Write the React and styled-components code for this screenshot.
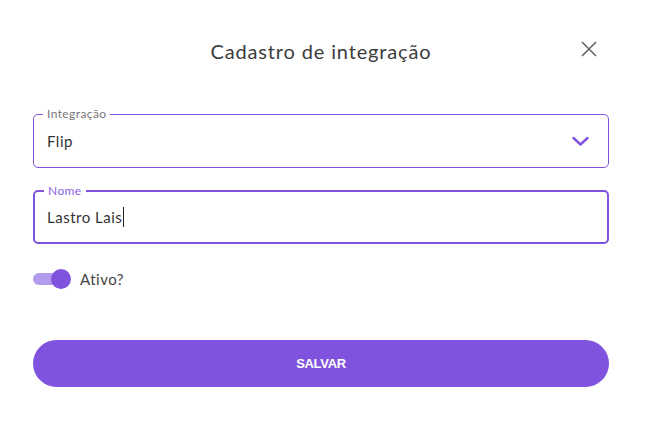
import React from "react";
import styled, { createGlobalStyle } from "styled-components";

const Global = createGlobalStyle`
  html, body { margin: 0; padding: 0; background: #fff; }
  body { font-family: "Lato", "Noto Sans", sans-serif; }
  * { box-sizing: border-box; }
`;

const Dialog = styled.div`
  width: 647px;
  height: 423px;
  background: #fff;
  padding: 0 38px 0 33px;
  display: flex;
  flex-direction: column;
`;

const Header = styled.div`
  height: 104px;
  display: flex;
  align-items: center;
  justify-content: center;
  position: relative;
  padding-bottom: 3px;
`;

const Title = styled.h2`
  margin: 0;
  font-size: 20px;
  font-weight: 400;
  color: #3c3c3c;
  letter-spacing: 0.85px;
`;

const Close = styled.button`
  position: absolute;
  right: 2px;
  top: 31px;
  width: 36px;
  height: 36px;
  border: none;
  background: transparent;
  display: flex;
  align-items: center;
  justify-content: center;
  padding: 0;
  cursor: pointer;
`;

const Field = styled.div`
  position: relative;
  height: 54px;
  border: ${(p) => (p.$focused ? "2px solid #7f53de" : "1px solid #7f53de")};
  border-radius: 5px;
  display: flex;
  align-items: center;
  padding: 0 ${(p) => (p.$focused ? "12px" : "13px")};
  margin-top: ${(p) => p.$mt || 0}px;
`;

const Label = styled.span`
  position: absolute;
  top: -8px;
  left: 9px;
  padding: 0 4px;
  background: #fff;
  font-size: 12px;
  letter-spacing: 0.4px;
  line-height: 14px;
  color: ${(p) => (p.$active ? "#8a62e3" : "#777")};
`;

const Value = styled.span`
  flex: 1;
  font-size: 15px;
  letter-spacing: 0.5px;
  color: #333;
  display: flex;
  align-items: center;
`;

const Caret = styled.span`
  display: inline-block;
  width: 1px;
  height: 20px;
  background: #222;
  margin-left: 1px;
`;

const Chevron = styled.svg`
  margin-right: 6px;
  flex: none;
`;

const SwitchRow = styled.div`
  display: flex;
  align-items: center;
  margin-top: 24px;
  height: 22px;
`;

const Track = styled.div`
  position: relative;
  width: 28px;
  height: 12px;
  border-radius: 6px;
  background: #b39bed;
`;

const Thumb = styled.div`
  position: absolute;
  right: -10px;
  top: -4px;
  width: 20px;
  height: 20px;
  border-radius: 50%;
  background: #7f53de;
`;

const SwitchLabel = styled.span`
  margin-left: 19px;
  font-size: 15px;
  letter-spacing: 0.5px;
  color: #444;
`;

const Button = styled.button`
  margin-top: 50px;
  height: 47px;
  width: 100%;
  border: none;
  border-radius: 24px;
  background: #7f53de;
  color: #fff;
  font-family: "Liberation Sans", Arial, sans-serif;
  font-weight: 700;
  font-size: 13px;
  letter-spacing: -0.3px;
  cursor: pointer;
`;

export default function App() {
  return (
    <>
      <Global />
      <Dialog>
        <Header>
          <Title>Cadastro de integração</Title>
          <Close aria-label="Fechar">
            <svg width="16" height="16" viewBox="0 0 16 16">
              <path d="M1 1 L15 15 M15 1 L1 15" stroke="#666" strokeWidth="1.6" />
            </svg>
          </Close>
        </Header>
        <Field $mt={10}>
          <Label>Integração</Label>
          <Value>Flip</Value>
          <Chevron width="17" height="12" viewBox="0 0 17 12">
            <path d="M1.5 3 L8.5 9.5 L15.5 3" fill="none" stroke="#7f53de" strokeWidth="2.4" strokeLinecap="round" strokeLinejoin="round" />
          </Chevron>
        </Field>
        <Field $focused $mt={22}>
          <Label $active>Nome</Label>
          <Value>
            Lastro Lais<Caret />
          </Value>
        </Field>
        <SwitchRow>
          <Track>
            <Thumb />
          </Track>
          <SwitchLabel>Ativo?</SwitchLabel>
        </SwitchRow>
        <Button>SALVAR</Button>
      </Dialog>
    </>
  );
}
